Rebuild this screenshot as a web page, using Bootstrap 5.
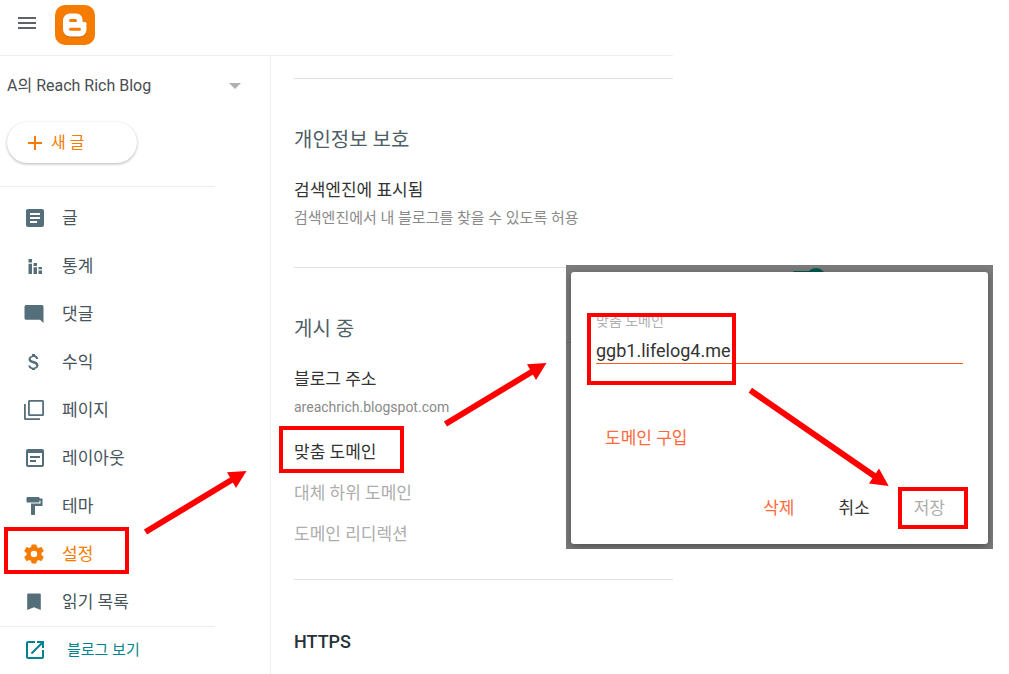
<!DOCTYPE html>
<html lang="ko">
<head>
<meta charset="utf-8">
<meta name="viewport" content="width=device-width, initial-scale=1">
<title>Blogger 설정</title>
<link href="https://cdn.jsdelivr.net/npm/bootstrap@5.3.0/dist/css/bootstrap.min.css" rel="stylesheet">
<style>
  body { font-family: Roboto, "Noto Sans CJK KR", sans-serif; font-size: 17px; line-height: 24px; color: #46545b; }
  a, button { color: inherit; text-decoration: none; }
  .bare { background: none; border: 0; padding: 0; }
  .icon { width: 24px; height: 24px; flex: none; fill: #546e7a; }

  .app-bar { padding: 4px 15px 10px; gap: 16px; border-bottom: 1px solid #eceff1; height: 56px; }
  .app-bar .icon { display: block; fill: #5f6368; }
  .logo { width: 40px; height: 40px; }

  .side { width: 271px; border-right: 1px solid #eceff1; }
  .blog-picker { padding: 18px 29px 24px 7px; font-size: 16px; color: #4a4e52; }
  .new-post { margin: 0 0 23px 7px; padding: 0 16px; width: 130px; height: 41px; gap: 4px; border-radius: 21px; background: #fff; font-size: 16px; color: #f57c00; box-shadow: 0 1px 3px rgba(0,0,0,.3); }
  .new-post .icon { fill: #f57c00; }
  .menu-group { border-top: 1px solid #eceff1; margin-right: 55px; padding-top: 7px; }
  .menu-group a { height: 48px; padding-left: 23px; gap: 15px; }
  .menu-group .current { color: #f57c00; }
  .menu-group .current .icon { fill: #f57c00; }
  .menu-group.view-blog { padding-top: 0; }
  .view-blog a { height: 46px; gap: 20px; font-size: 15px; color: #00838f; }
  .view-blog .icon { fill: #00838f; }

  .settings { padding: 22px 0 0 23px; }
  .settings section { border-top: 1px solid #e0e0e0; padding: 47px 0 25px; }
  .settings h2 { font-size: 20px; line-height: 28px; margin-bottom: 24px; color: #4f5f67; }
  .settings h2.latin { font-size: 18px; line-height: 30px; font-weight: 500; color: #263238; }
  .entry { color: #333; line-height: 24px; }
  .hint { font-size: 15px; margin: 4px 0 12px; color: #8a8a8a; }
  .hint.latin { font-size: 14px; }
  .entry-row { height: 41px; }
  .entry-off { color: #adadad; }

  .scene { position: absolute; top: 265px; right: 16px; width: 427px; padding: 7px 5px 5px; background: #7b7b7b; overflow: hidden; }
  .switch-peek { position: absolute; left: 226px; top: 3px; width: 34px; height: 10px; fill: #00574b; }
  .rule-peek { position: absolute; left: 0; top: 77px; width: 5px; height: 1px; background: #6a6a6a; }
  .sheet { position: relative; background: #fff; border-radius: 3px; padding: 37px 25px 24px; box-shadow: 0 3px 8px rgba(0,0,0,.35); }
  .sheet label { display: block; font-size: 14px; color: #b0b0b0; }
  .domain-box { width: 100%; height: 31px; border: 0; border-bottom: 1px solid #ff5722; padding: 4px 0 0; font-size: 18px; color: #333; outline: 0; }
  .buy { margin: 62px 0 46px 9px; }
  .actions { gap: 44px; padding-right: 18px; }
  .accent { color: #ff6a3c; }

  .ring { position: absolute; border: 4px solid #f00; pointer-events: none; }
  .ring-row { width: 125px; height: 47px; }
  .ring-menu { left: 4px; top: -3px; }
  .ring-entry { left: -15px; top: -5px; }
  .ring-field { left: 16px; top: 41px; width: 149px; height: 72px; }
  .ring-save { left: -16px; top: -9px; width: 70px; height: 42px; }
  .arrow { position: absolute; fill: #f00; stroke: none; pointer-events: none; z-index: 2; }
  .arrow-up { width: 112px; height: 72px; }
  .arrow-menu { left: 140px; top: -65px; }
  .arrow-entry { left: 146px; top: -74px; }
  .arrow-down { left: 178px; top: 119px; width: 150px; height: 108px; }
</style>
</head>
<body class="bg-white position-relative">
<svg class="d-none">
  <symbol id="arrow-up" viewBox="0 0 112 72"><line x1="5.500" y1="67" x2="94" y2="13.500" stroke="#f00" stroke-width="6"/><path d="M106.500 6 87 7.300l9 15.700z"/></symbol>
</svg>

<div class="col-8 min-vh-100 d-flex flex-column">
  <header class="app-bar d-flex align-items-center">
    <button class="bare pb-1" aria-label="메뉴"><svg class="icon" viewBox="0 0 24 24"><path d="M3 18h18v-2H3v2zm0-5h18v-2H3v2zm0-7v2h18V6H3z"/></svg></button>
    <a href="#" aria-label="Blogger"><svg class="logo d-block" viewBox="0 0 40 40">
      <rect width="40" height="40" rx="10" fill="#f57c00"/>
      <path d="M15 9.500h6.500a6 6 0 0 1 6 6v1.200a1.300 1.300 0 0 0 1.300 1.300h1.200a1.500 1.500 0 0 1 1.500 1.500V26a6.500 6.500 0 0 1-6.500 6.500H15A7 7 0 0 1 8 25.500v-9a7 7 0 0 1 7-7z" fill="#c96400"/>
      <path d="M15 8.500h6.500a6 6 0 0 1 6 6v1.200a1.300 1.300 0 0 0 1.300 1.300h1.200a1.500 1.500 0 0 1 1.500 1.500V25a6.500 6.500 0 0 1-6.500 6.500H15A7 7 0 0 1 8 24.500v-9a7 7 0 0 1 7-7z" fill="#fff"/>
      <path d="M15.500 15.500h5M15.500 24.300h9" stroke="#f57c00" stroke-width="3" stroke-linecap="round"/>
    </svg></a>
  </header>

  <div class="d-flex flex-grow-1">
    <aside class="side flex-shrink-0">
      <button class="bare blog-picker w-100 d-flex align-items-center justify-content-between">A의 Reach Rich Blog
        <svg width="12" height="6" viewBox="0 0 12 6" fill="#b0b0b0"><path d="M0 0h12L6 6z"/></svg></button>
      <button class="bare new-post d-flex align-items-center"><svg class="icon" viewBox="0 0 24 24"><path d="M19 13h-6v6h-2v-6H5v-2h6V5h2v6h6v2z"/></svg>새 글</button>
      <nav class="menu-group d-flex flex-column">
        <a href="#" class="d-flex align-items-center"><svg class="icon" viewBox="0 0 24 24"><path d="M19 3H5a2 2 0 0 0-2 2v14c0 1.100.9 2 2 2h14a2 2 0 0 0 2-2V5a2 2 0 0 0-2-2zm-5 14H7v-2h7v2zm3-4H7v-2h10v2zm0-4H7V7h10v2z"/></svg>글</a>
        <a href="#" class="d-flex align-items-center"><svg class="icon" viewBox="0 0 24 24"><path d="M5.500 5H9v3.500H5.500zM5.500 9.700H9V20H5.500zM10.500 9H14v3h-3.500zM10.500 13.300H14V20h-3.500zM15.500 13H19v2.300h-3.500zM15.500 16.500H19V20h-3.500z"/></svg>통계</a>
        <a href="#" class="d-flex align-items-center"><svg class="icon" viewBox="0 0 24 24"><path d="M20.500 4.500A1.500 1.500 0 0 0 19 3H3A1.500 1.500 0 0 0 1.500 4.500v11.800A1.500 1.500 0 0 0 3 17.800H17L20.500 21z"/></svg>댓글</a>
        <a href="#" class="d-flex align-items-center"><svg class="icon" viewBox="0 0 24 24"><path d="M10.800 10.900c-2.270-.59-3-1.200-3-2.150 0-1.090 1.010-1.850 2.700-1.850 1.780 0 2.440.85 2.500 2.100h2.210c-.07-1.720-1.120-3.300-3.210-3.810V4H9v1.690c-1.940.42-3.500 1.680-3.500 3.610 0 2.310 1.910 3.460 4.700 4.130 2.500.6 3 1.480 3 2.410 0 .69-.49 1.790-2.700 1.790-2.060 0-2.870-.92-2.980-2.100H5.320c.12 2.190 1.760 3.420 3.680 3.830V20h3v-1.150c1.950-.37 3.500-1.500 3.500-3.550 0-2.840-2.430-3.810-4.700-4.400z"/></svg>수익</a>
        <a href="#" class="d-flex align-items-center"><svg class="icon" viewBox="0 0 24 24"><path d="M6.500 2h13A1.500 1.500 0 0 1 21 3.500v13a1.500 1.500 0 0 1-1.500 1.500h-13A1.500 1.500 0 0 1 5 16.500v-13A1.500 1.500 0 0 1 6.500 2zM6.800 3.800v12.400h12.400V3.800zM1 6h1.800v14.200H17V22H2.500A1.500 1.500 0 0 1 1 20.500z" fill-rule="evenodd"/></svg>페이지</a>
        <a href="#" class="d-flex align-items-center"><svg class="icon" viewBox="0 0 24 24"><path d="M19 3H5a2 2 0 0 0-2 2v14a2 2 0 0 0 2 2h14a2 2 0 0 0 2-2V5a2 2 0 0 0-2-2zm0 16H5V7h14zM17 10H7v2h10zm-4 4H7v2h6z" fill-rule="evenodd"/></svg>레이아웃</a>
        <a href="#" class="d-flex align-items-center"><svg class="icon" viewBox="0 0 24 24"><path d="M16.500 4.500V4c0-.5-.4-1-1-1h-11c-.5 0-1 .5-1 1v3.500c0 .6.500 1 1 1h11c.6 0 1-.4 1-1V6.500h1v3H8V20c0 .6.400 1 1 1h2c.6 0 1-.4 1-1v-8h7.500V4.500z"/></svg>테마</a>
        <div class="position-relative">
          <a href="#" class="current d-flex align-items-center"><svg class="icon" viewBox="0 0 24 24"><path d="M18.430 12.980c.04-.32.070-.64.070-.98s-.03-.66-.07-.98l2.110-1.650a.5.5 0 0 0 .12-.64l-2-3.460a.5.5 0 0 0-.61-.22l-2.490 1a7.300 7.300 0 0 0-1.690-.98l-.38-2.150A.49.49 0 0 0 13 2.500H9a.49.49 0 0 0-.49.42l-.38 2.150c-.61.250-1.170.590-1.690.98l-2.490-1a.49.49 0 0 0-.61.220l-2 3.460a.49.49 0 0 0 .12.640l2.110 1.650c-.04.320-.07.650-.07.980s.03.660.07.980l-2.110 1.650a.5.5 0 0 0-.12.640l2 3.460c.12.220.390.300.610.220l2.490-1c.52.400 1.080.730 1.690.980l.38 2.150c.03.240.240.420.49.420h4c.25 0 .46-.18.490-.42l.38-2.150a7.700 7.700 0 0 0 1.690-.98l2.490 1c.23.090.49 0 .61-.22l2-3.460a.5.5 0 0 0-.12-.64zM11 15.200a3.200 3.200 0 1 1 0-6.400 3.200 3.200 0 0 1 0 6.400z"/></svg>설정</a>
          <span class="ring ring-row ring-menu"></span>
          <svg class="arrow arrow-up arrow-menu"><use href="#arrow-up"/></svg>
        </div>
        <a href="#" class="d-flex align-items-center"><svg class="icon" viewBox="0 0 24 24"><path d="M16.500 3.500h-11c-.8 0-1.300.5-1.300 1.300V20l6.800-2.800 6.800 2.800V4.800c0-.8-.5-1.300-1.300-1.300z"/></svg>읽기 목록</a>
      </nav>
      <div class="menu-group view-blog">
        <a href="#" class="d-flex align-items-center"><svg class="icon" viewBox="0 0 24 24"><path d="M19 19H5V5h7V3H5a2 2 0 0 0-2 2v14a2 2 0 0 0 2 2h14c1.100 0 2-.9 2-2v-7h-2v7zM14 3v2h3.590l-9.830 9.830 1.410 1.410L19 6.410V10h2V3h-7z"/></svg>블로그 보기</a>
      </div>
    </aside>

    <main class="settings flex-grow-1">
      <section>
        <h2 class="fw-normal">개인정보 보호</h2>
        <div class="entry">검색엔진에 표시됨</div>
        <p class="hint">검색엔진에서 내 블로그를 찾을 수 있도록 허용</p>
      </section>
      <section>
        <h2 class="fw-normal">게시 중</h2>
        <div class="entry">블로그 주소</div>
        <p class="hint latin">areachrich.blogspot.com</p>
        <div class="position-relative">
          <button class="bare entry entry-row d-block">맞춤 도메인</button>
          <span class="ring ring-row ring-entry"></span>
          <svg class="arrow arrow-up arrow-entry"><use href="#arrow-up"/></svg>
        </div>
        <button class="bare entry-row entry-off d-block" disabled>대체 하위 도메인</button>
        <button class="bare entry-row entry-off d-block" disabled>도메인 리디렉션</button>
      </section>
      <section class="pb-0">
        <h2 class="latin mb-0">HTTPS</h2>
      </section>
    </main>
  </div>
</div>

<div class="scene" role="dialog" aria-label="맞춤 도메인">
  <svg class="switch-peek" viewBox="0 0 34 10"><rect y="3" width="24" height="7" rx="3"/><circle cx="24" cy="10" r="10"/></svg>
  <span class="rule-peek"></span>
  <form class="sheet" onsubmit="return false">
    <label for="domain">맞춤 도메인</label>
    <input class="domain-box" id="domain" type="text" value="ggb1.lifelog4.me" spellcheck="false">
    <button type="button" class="bare accent buy d-block">도메인 구입</button>
    <div class="actions d-flex justify-content-end">
      <button type="button" class="bare accent">삭제</button>
      <button type="button" class="bare entry">취소</button>
      <div class="position-relative">
        <button type="submit" class="bare entry-off" disabled>저장</button>
        <span class="ring ring-save"></span>
      </div>
    </div>
    <span class="ring ring-field"></span>
  </form>
  <svg class="arrow arrow-down" viewBox="0 0 150 108"><line x1="6.300" y1="6.300" x2="134" y2="94.500" stroke="#f00" stroke-width="6"/><path d="M144.700 102 135 84.500l-10 15z"/></svg>
</div>
<script src="https://cdn.jsdelivr.net/npm/bootstrap@5.3.0/dist/js/bootstrap.bundle.min.js"></script>
</body>
</html>
